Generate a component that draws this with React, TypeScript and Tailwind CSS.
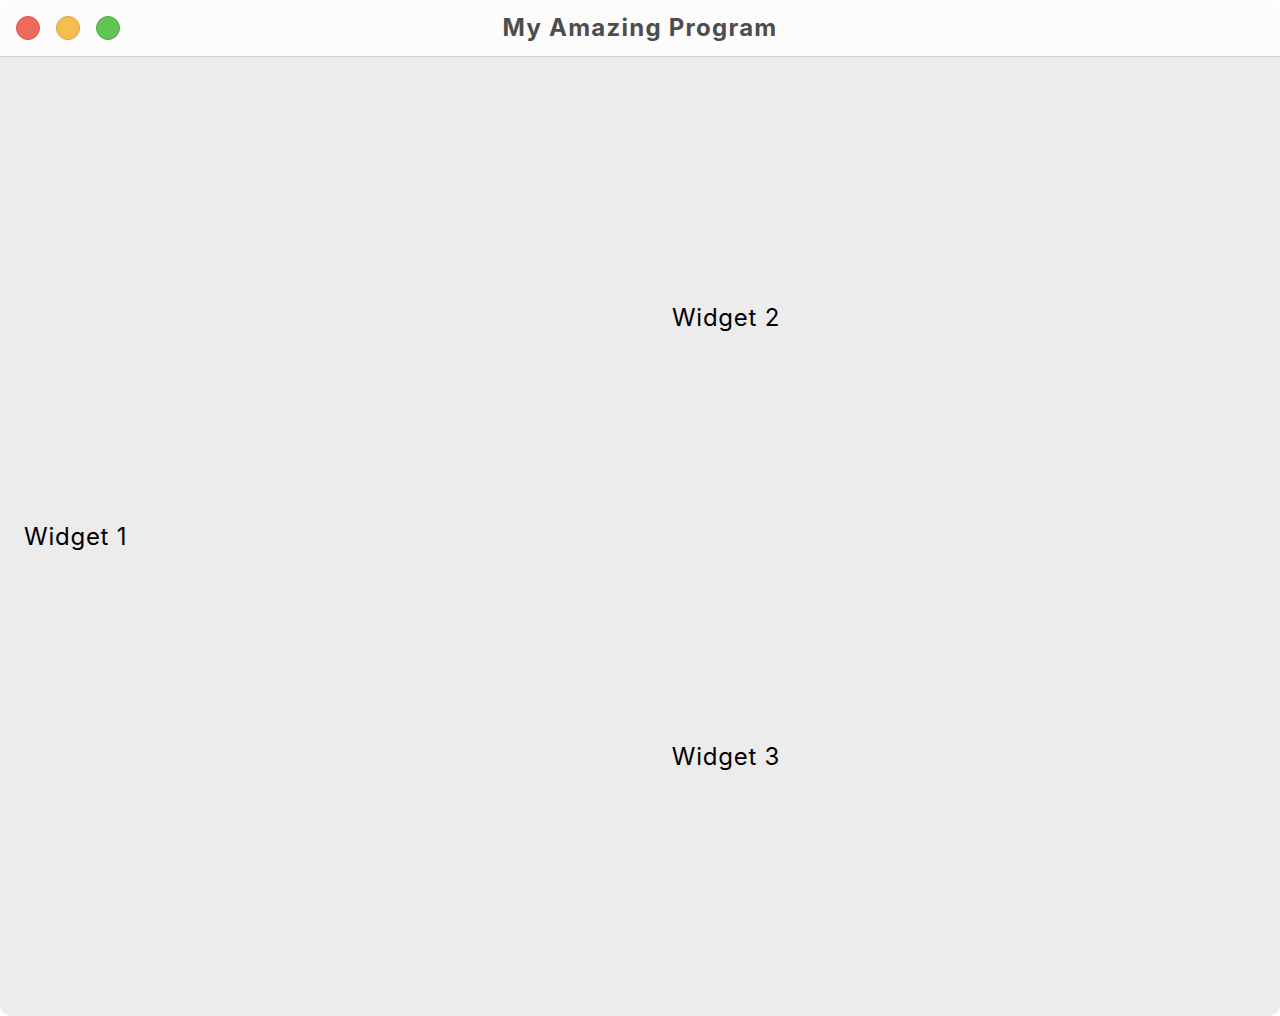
export default function App() {
  return (
    <div className="h-[1016px] w-[1280px] bg-white">
      <div className="flex h-full w-full flex-col overflow-hidden rounded-[12px] bg-[#ececec]">
        {/* title bar */}
        <div className="relative flex h-[57px] shrink-0 items-center justify-center border-b border-[#cfcfcf] bg-[#fcfcfc]">
          <div className="absolute left-[16px] top-[16px] flex gap-[16px]">
            <span className="h-[24px] w-[24px] rounded-full border border-[#d6574c] bg-[#ee6a5f]" />
            <span className="h-[24px] w-[24px] rounded-full border border-[#d9a340] bg-[#f5bf4f]" />
            <span className="h-[24px] w-[24px] rounded-full border border-[#4fa944] bg-[#61c554]" />
          </div>
          <span className="font-['Inter',sans-serif] text-[24px] font-bold tracking-[1.25px] text-[#4d4d4d]">
            My Amazing Program
          </span>
        </div>

        {/* content */}
        <div className="flex flex-1 font-['Inter',sans-serif] text-[24px] tracking-[0.75px] text-black">
          <div className="flex w-[172px] items-center pl-[24px]">
            <span>Widget 1</span>
          </div>
          <div className="flex flex-1 flex-col py-[40px]">
            <div className="flex flex-1 items-center justify-center pt-[2px]">
              <span>Widget 2</span>
            </div>
            <div className="flex flex-1 items-center justify-center pt-[2px]">
              <span>Widget 3</span>
            </div>
          </div>
        </div>
      </div>
    </div>
  );
}
